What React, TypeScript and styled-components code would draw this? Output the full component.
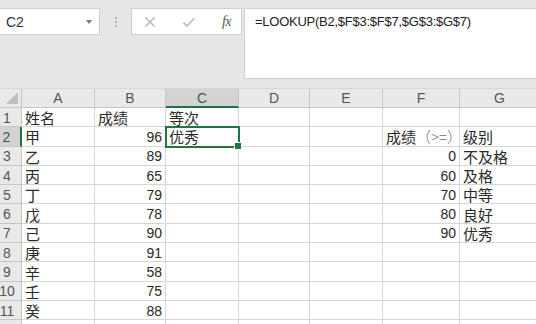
import { Fragment } from "react";
import styled, { createGlobalStyle, css } from "styled-components";

// --- 스타일 정의 ---
const GREEN = "#217346";
const GRID = "#d6d6d6";
const HEAD_LINE = "#c6c6c6";
const CJK = `"Noto Sans CJK SC", "Liberation Sans", sans-serif`;
const LATIN = `"Liberation Sans", "Noto Sans CJK SC", sans-serif`;

const COLS = [22, 73, 71, 73, 71, 73, 77, 80];
const LETTERS = ["A", "B", "C", "D", "E", "F", "G"];

const GlobalStyle = createGlobalStyle`
  html, body {
    margin: 0;
    padding: 0;
    background: #ffffff;
    overflow: hidden;
  }
  * { box-sizing: border-box; }
`;

const Page = styled.div`
  width: 536px;
  height: 324px;
  overflow: hidden;
  background: #ffffff;
  font-family: ${LATIN};
`;

const TopBar = styled.div`
  height: 88px;
  background: #e6e6e6;
  padding-top: 8px;
  display: flex;
  align-items: flex-start;
`;

const NameBox = styled.div`
  width: 100px;
  height: 27px;
  background: #ffffff;
  border: 1px solid #d0d0d0;
  border-left: none;
  display: flex;
  align-items: center;
  justify-content: space-between;
  padding: 0 7px 0 6px;
  font-size: 14px;
  color: #333;
`;

const DropArrow = styled.span`
  width: 0;
  height: 0;
  border-left: 3.5px solid transparent;
  border-right: 3.5px solid transparent;
  border-top: 4px solid #777;
`;

const Grip = styled.div`
  width: 31px;
  height: 27px;
  display: flex;
  flex-direction: column;
  align-items: center;
  justify-content: center;
  gap: 2px;

  span {
    width: 2px;
    height: 2px;
    background: #b4b4b4;
  }
`;

const FxBox = styled.div`
  width: 111px;
  height: 27px;
  background: #ffffff;
  border: 1px solid #d0d0d0;
  display: flex;
  align-items: center;
  padding: 0 10px 0 12px;
  justify-content: space-between;
`;

const FxLabel = styled.span`
  font-family: "Liberation Serif", serif;
  font-style: italic;
  font-size: 14px;
  color: #555;
  letter-spacing: -0.5px;
`;

const FormulaBox = styled.div`
  flex: 1;
  margin-left: 2px;
  height: 71px;
  background: #ffffff;
  border: 1px solid #d0d0d0;
  border-right: none;
  padding: 5px 0 0 10px;
  font-size: 13px;
  color: #222;
  letter-spacing: -0.25px;
`;

const Sheet = styled.div`
  display: grid;
  grid-template-columns: ${COLS.map((c) => c + "px").join(" ")};
  grid-template-rows: 20px repeat(12, 19.3px);
`;

const Corner = styled.div`
  background: #e9e9e9;
  border-right: 1px solid ${HEAD_LINE};
  border-bottom: 1px solid ${HEAD_LINE};
  border-top: 1px solid #d8d8d8;
  position: relative;

  &::after {
    content: "";
    position: absolute;
    right: 3px;
    bottom: 3px;
    width: 0;
    height: 0;
    border-left: 12px solid transparent;
    border-bottom: 12px solid #c0c0c0;
  }
`;

const ColHead = styled.div<{ $active?: boolean }>`
  background: ${(p) => (p.$active ? "#d3d3d3" : "#e9e9e9")};
  border-top: 1px solid #d8d8d8;
  border-right: 1px solid ${HEAD_LINE};
  border-bottom: ${(p) => (p.$active ? `2px solid ${GREEN}` : `1px solid ${HEAD_LINE}`)};
  display: flex;
  align-items: center;
  justify-content: center;
  font-size: 14px;
  color: ${(p) => (p.$active ? "#3d5c4b" : "#555")};
`;

const RowHead = styled.div<{ $active?: boolean }>`
  background: ${(p) => (p.$active ? "#d3d3d3" : "#e9e9e9")};
  border-right: ${(p) => (p.$active ? `2px solid ${GREEN}` : `1px solid ${HEAD_LINE}`)};
  border-bottom: 1px solid ${HEAD_LINE};
  display: flex;
  align-items: center;
  justify-content: center;
  padding-right: 7px;
  padding-top: 1px;
  font-size: 14px;
  color: ${(p) => (p.$active ? "#3d5c4b" : "#555")};
  white-space: nowrap;
`;

const Cell = styled.div<{ $num?: boolean; $selected?: boolean }>`
  position: relative;
  border-right: 1px solid ${GRID};
  border-bottom: 1px solid ${GRID};
  display: flex;
  align-items: center;
  padding: 1px 3px 0 3px;
  font-family: ${(p) => (p.$num ? LATIN : CJK)};
  font-size: ${(p) => (p.$num ? "14px" : "15px")};
  color: #2a2a2a;
  white-space: nowrap;
  justify-content: ${(p) => (p.$num ? "flex-end" : "flex-start")};
  overflow: visible;

  ${(p) =>
    p.$selected &&
    css`
      &::before {
        content: "";
        position: absolute;
        left: -1px;
        top: -1px;
        right: -2px;
        bottom: -2px;
        border: 2px solid ${GREEN};
        z-index: 2;
      }
      &::after {
        content: "";
        position: absolute;
        right: -4px;
        bottom: -4px;
        width: 6px;
        height: 6px;
        background: ${GREEN};
        border: 1px solid #ffffff;
        z-index: 3;
      }
    `}
`;

const Paren = styled.span`
  font-family: ${CJK};
  color: #777;
  font-weight: 300;
`;

type Row = (string | number | null)[];

const rows: Row[] = [
  ["姓名", "成绩", "等次", null, null, null, null],
  ["甲", 96, "优秀", null, null, "成绩（>=）", "级别"],
  ["乙", 89, null, null, null, 0, "不及格"],
  ["丙", 65, null, null, null, 60, "及格"],
  ["丁", 79, null, null, null, 70, "中等"],
  ["戊", 78, null, null, null, 80, "良好"],
  ["己", 90, null, null, null, 90, "优秀"],
  ["庚", 91, null, null, null, null, null],
  ["辛", 58, null, null, null, null, null],
  ["壬", 75, null, null, null, null, null],
  ["癸", 88, null, null, null, null, null],
  [null, null, null, null, null, null, null],
];

function renderValue(v: string | number | null) {
  if (v === "成绩（>=）") {
    return (
      <>
        成绩<Paren>（&gt;=）</Paren>
      </>
    );
  }
  return v;
}

// --- 컴포넌트 구현 ---
export default function App() {
  return (
    <Page>
      <GlobalStyle />
      <TopBar>
        <NameBox>
          C2
          <DropArrow />
        </NameBox>
        <Grip>
          <span />
          <span />
          <span />
        </Grip>
        <FxBox>
          <svg width="12" height="12" viewBox="0 0 12 12">
            <path d="M1.5 1.5 L10.5 10.5 M10.5 1.5 L1.5 10.5" stroke="#b5b5b5" strokeWidth="1.4" fill="none" />
          </svg>
          <svg width="14" height="12" viewBox="0 0 14 12">
            <path d="M1.5 6.5 L5 10 L12.5 2" stroke="#c0c0c0" strokeWidth="1.8" fill="none" />
          </svg>
          <FxLabel>fx</FxLabel>
        </FxBox>
        <FormulaBox>=LOOKUP(B2,$F$3:$F$7,$G$3:$G$7)</FormulaBox>
      </TopBar>

      <Sheet>
        <Corner />
        {LETTERS.map((l) => (
          <ColHead key={l} $active={l === "C"}>
            {l}
          </ColHead>
        ))}
        {rows.map((row, r) => (
          <Fragment key={"r" + r}>
            <RowHead $active={r === 1}>{r + 1}</RowHead>
            {row.map((v, c) => (
              <Cell
                key={r + "-" + c}
                $num={typeof v === "number"}
                $selected={r === 1 && c === 2}
              >
                {renderValue(v)}
              </Cell>
            ))}
          </Fragment>
        ))}
      </Sheet>
    </Page>
  );
}
